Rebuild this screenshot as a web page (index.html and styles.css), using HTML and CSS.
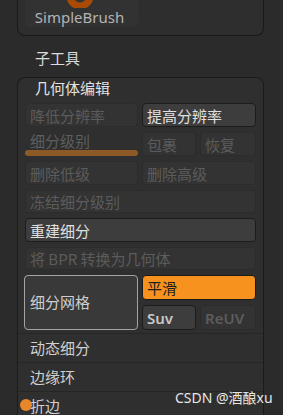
FILE: index.html
```html
<!DOCTYPE html>
<html lang="zh">
<head>
  <meta charset="UTF-8">
  <meta name="viewport" content="width=device-width, initial-scale=1.0">
  <title>几何体编辑</title>
  <link rel="stylesheet" href="styles.css">
</head>
<body>
  <div class="palette">
    <div class="tool-card">
      <div class="brush-btn">
        <div class="brush-icon">
          <svg width="40" height="8" viewBox="0 0 40 8">
            <defs>
              <radialGradient id="ring" cx="50%" cy="0%" r="75%">
                <stop offset="0" stop-color="#ffd84e"/>
                <stop offset="0.45" stop-color="#f59b1d"/>
                <stop offset="1" stop-color="#a94a04"/>
              </radialGradient>
            </defs>
            <circle cx="20" cy="-4" r="10" fill="none" stroke="url(#ring)" stroke-width="7"/>
          </svg>
        </div>
        <div class="brush-name">SimpleBrush</div>
      </div>
    </div>

    <div class="sub-title">子工具</div>

    <div class="section">
      <div class="section-title">几何体编辑</div>

      <div class="grid">
        <div class="btn off">降低分辨率</div>
        <div class="btn on span2">提高分辨率</div>

        <div class="slider">
          <div class="slider-label">细分级别</div>
          <div class="slider-bar"></div>
        </div>
        <div class="btn off">包裹</div>
        <div class="btn off">恢复</div>

        <div class="btn off">删除低级</div>
        <div class="btn off span2">删除高级</div>

        <div class="btn off span3">冻结细分级别</div>
        <div class="btn on span3">重建细分</div>
        <div class="btn off span3">将 BPR 转换为几何体</div>

        <div class="btn mesh">细分网格</div>
        <div class="btn orange span2">平滑</div>
        <div class="btn on latin">Suv</div>
        <div class="btn off latin">ReUV</div>
      </div>

      <div class="list">
        <div class="list-row">动态细分</div>
        <div class="list-row">边缘环</div>
        <div class="list-row marked">折边<span class="dot"></span></div>
      </div>
    </div>
  </div>

  <div class="watermark">CSDN @酒酿xu</div>
</body>
</html>
```

FILE: styles.css
```css
* {
  box-sizing: border-box;
}

body {
  margin: 0;
  height: 415px;
  overflow: hidden;
  background: #2b2b2b;
  font-family: "Noto Sans CJK SC", "Noto Sans", sans-serif;
  font-size: 15px;
  color: #d8d8d8;
  position: relative;
}

.palette {
  margin-left: 17px;
  width: 247px;
}

.tool-card {
  height: 36px;
  padding: 0 0 0 7px;
  border: 1px solid #1a1a1a;
  border-top: none;
  border-radius: 0 0 8px 8px;
  background: #2e2e2e;
}

.brush-btn {
  width: 113px;
  height: 27px;
  background: #323232;
  border-radius: 0 0 4px 4px;
}

.brush-icon {
  height: 8px;
  display: flex;
  justify-content: center;
  margin-left: -3px;
}

.brush-icon svg {
  display: block;
}

.brush-name {
  height: 19px;
  line-height: 18px;
  text-align: center;
  color: #b4b4b4;
  font-family: "Noto Sans", sans-serif;
  font-size: 15px;
  padding-right: 4px;
}

.sub-title {
  height: 41px;
  padding: 12px 0 0 18px;
  line-height: 20px;
  color: #dcdcdc;
}

.section {
  height: 340px;
  border: 1px solid #1b1b1b;
  border-bottom: none;
  border-radius: 8px 8px 0 0;
  background: #2f2f2f;
}

.section-title {
  height: 25px;
  padding-left: 17px;
  line-height: 20px;
  color: #e2e2e2;
}

.grid {
  display: grid;
  grid-template-columns: 113px 54px 56px;
  grid-template-rows: 24px 24px 24px 23px 24px 23px 25px 25px;
  column-gap: 4px;
  row-gap: 5px;
  padding: 0 7px;
}

.btn {
  border-radius: 4px;
  padding-left: 4px;
  white-space: nowrap;
  display: flex;
  align-items: center;
}

.off {
  background: #333333;
  border: 1px solid #2c2c2c;
  color: #5c5c5c;
}

.on {
  background: #3d3d3d;
  border: 1px solid #1c1c1c;
  color: #e0e0e0;
}

.span2 {
  grid-column: span 2;
}

.span3 {
  grid-column: span 3;
}

.latin {
  font-family: "Noto Sans", sans-serif;
  font-weight: 600;
}

.btn.on.latin {
  color: #c8c8c8;
}

.slider {
  display: flex;
  flex-direction: column;
}

.slider-label {
  height: 18px;
  line-height: 18px;
  padding-left: 5px;
  color: #5e5e5e;
}

.slider-bar {
  height: 6px;
  border-radius: 3px;
  background: #8d5a27;
}

.mesh {
  grid-row: span 2;
  margin-left: -1px;
  background: #393939;
  border: 1.5px solid #a3a3a3;
  color: #cfcfcf;
  padding-left: 5px;
  padding-bottom: 2px;
}

.orange {
  background: #f8921f;
  border: 1px solid #1a1a1a;
  color: #1e1e1e;
}

.list {
  margin-top: 3px;
}

.list-row {
  height: 29px;
  line-height: 27px;
  border-top: 1px solid #262626;
  padding-left: 12px;
  color: #d0d0d0;
  position: relative;
}

.dot {
  position: absolute;
  left: 2px;
  top: 7px;
  width: 12px;
  height: 12px;
  border-radius: 50%;
  background: #e8862a;
}

.watermark {
  position: absolute;
  left: 175px;
  top: 388px;
  font-family: "Noto Sans", "Noto Sans CJK SC", sans-serif;
  font-size: 14px;
  line-height: 20px;
  color: #e6e6e6;
  white-space: nowrap;
}
```
